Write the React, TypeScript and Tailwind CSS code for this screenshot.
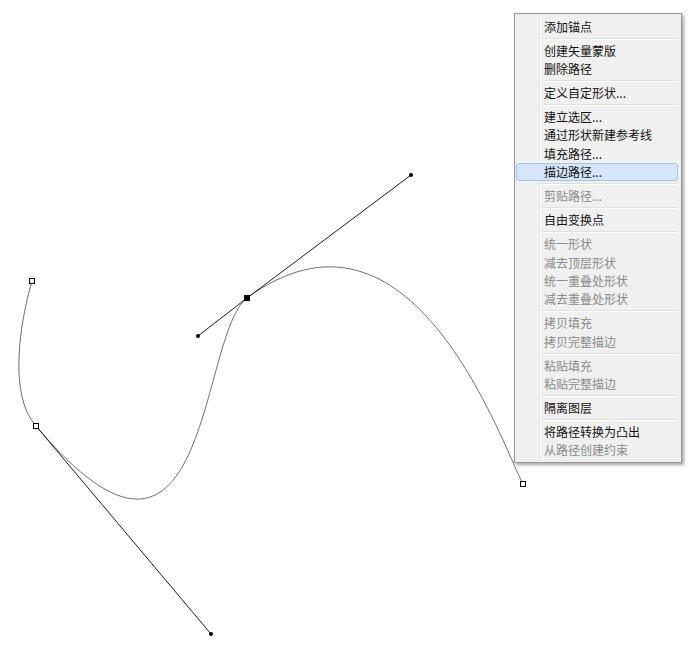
import type { ReactNode } from 'react'

/*
 * Path editing canvas with the pen tool's right-click menu open.
 * The curve, handles and anchors are a drawing; the menu sits over it.
 */

type Item = { label: string; disabled?: boolean; active?: boolean } | 'sep'

const MENU: Item[] = [
  { label: '添加锚点' },
  'sep',
  { label: '创建矢量蒙版' },
  { label: '删除路径' },
  'sep',
  { label: '定义自定形状...' },
  'sep',
  { label: '建立选区...' },
  { label: '通过形状新建参考线' },
  { label: '填充路径...' },
  { label: '描边路径...', active: true },
  'sep',
  { label: '剪贴路径...', disabled: true },
  'sep',
  { label: '自由变换点' },
  'sep',
  { label: '统一形状', disabled: true },
  { label: '减去顶层形状', disabled: true },
  { label: '统一重叠处形状', disabled: true },
  { label: '减去重叠处形状', disabled: true },
  'sep',
  { label: '拷贝填充', disabled: true },
  { label: '拷贝完整描边', disabled: true },
  'sep',
  { label: '粘贴填充', disabled: true },
  { label: '粘贴完整描边', disabled: true },
  'sep',
  { label: '隔离图层' },
  'sep',
  { label: '将路径转换为凸出' },
  { label: '从路径创建约束', disabled: true },
]

function Anchor({ x, y, filled }: { x: number; y: number; filled?: boolean }) {
  return (
    <rect
      x={x - 2.5}
      y={y - 2.5}
      width={5}
      height={5}
      fill={filled ? '#000' : '#fff'}
      stroke="#000"
      strokeWidth={1}
    />
  )
}

function Handle({ from, to }: { from: [number, number]; to: [number, number] }) {
  return (
    <g>
      <line x1={from[0]} y1={from[1]} x2={to[0]} y2={to[1]} stroke="#1a1a1a" strokeWidth={1} />
      <circle cx={to[0]} cy={to[1]} r={2} fill="#000" />
    </g>
  )
}

function PathDrawing() {
  return (
    <svg className="absolute inset-0" width={692} height={671} viewBox="0 0 692 671">
      <path
        d="M32 281 C20 322, 8 395, 36 426 C211 634, 198 336, 247 298 C411 178, 500 440, 523 484"
        fill="none"
        stroke="#6f6f6f"
        strokeWidth={1}
      />
      <Handle from={[36, 426]} to={[211, 634]} />
      <Handle from={[247, 298]} to={[198, 336]} />
      <Handle from={[247, 298]} to={[411, 175]} />
      <Anchor x={32} y={281} />
      <Anchor x={36} y={426} />
      <Anchor x={247} y={298} filled />
      <Anchor x={523} y={484} />
    </svg>
  )
}

function MenuRow({ children, disabled, active }: { children: ReactNode; disabled?: boolean; active?: boolean }) {
  return (
    <div
      className={`ml-[1px] mr-[3px] h-[18.4px] flex items-center rounded-[3px] border ${
        active ? 'bg-[#d6e6f8] border-[#a4c2e6]' : 'border-transparent'
      }`}
    >
      <span
        className={`pl-[27px] text-[12px] leading-[18px] whitespace-nowrap ${
          disabled ? 'text-[#8a8a8a]' : 'text-[#111]'
        }`}
      >
        {children}
      </span>
    </div>
  )
}

function ContextMenu() {
  return (
    <div
      className="absolute left-[514px] top-[13px] w-[168px] border border-[#979797] bg-[#f0f0f0] pt-[3.5px] pb-[2px] shadow-[2px_2px_3px_rgba(0,0,0,0.35)]"
      style={{ fontFamily: '"Noto Sans CJK SC", "Microsoft YaHei", sans-serif' }}
    >
      {/* gutter line */}
      <div className="absolute left-[24px] top-[2px] bottom-[2px] w-[2px] border-l border-[#e2e3e3] border-r border-r-white" />
      <div className="relative">
        {MENU.map((item, i) =>
          item === 'sep' ? (
            <div key={i} className="h-[5.6px] flex flex-col justify-center pl-[26px] pr-[3px]">
              <div className="h-px bg-[#e0e0e0]" />
              <div className="h-px bg-white" />
            </div>
          ) : (
            <MenuRow key={i} disabled={item.disabled} active={item.active}>
              {item.label}
            </MenuRow>
          ),
        )}
      </div>
    </div>
  )
}

export default function App() {
  return (
    <div className="relative w-[692px] h-[671px] bg-white overflow-hidden">
      <PathDrawing />
      <ContextMenu />
    </div>
  )
}
